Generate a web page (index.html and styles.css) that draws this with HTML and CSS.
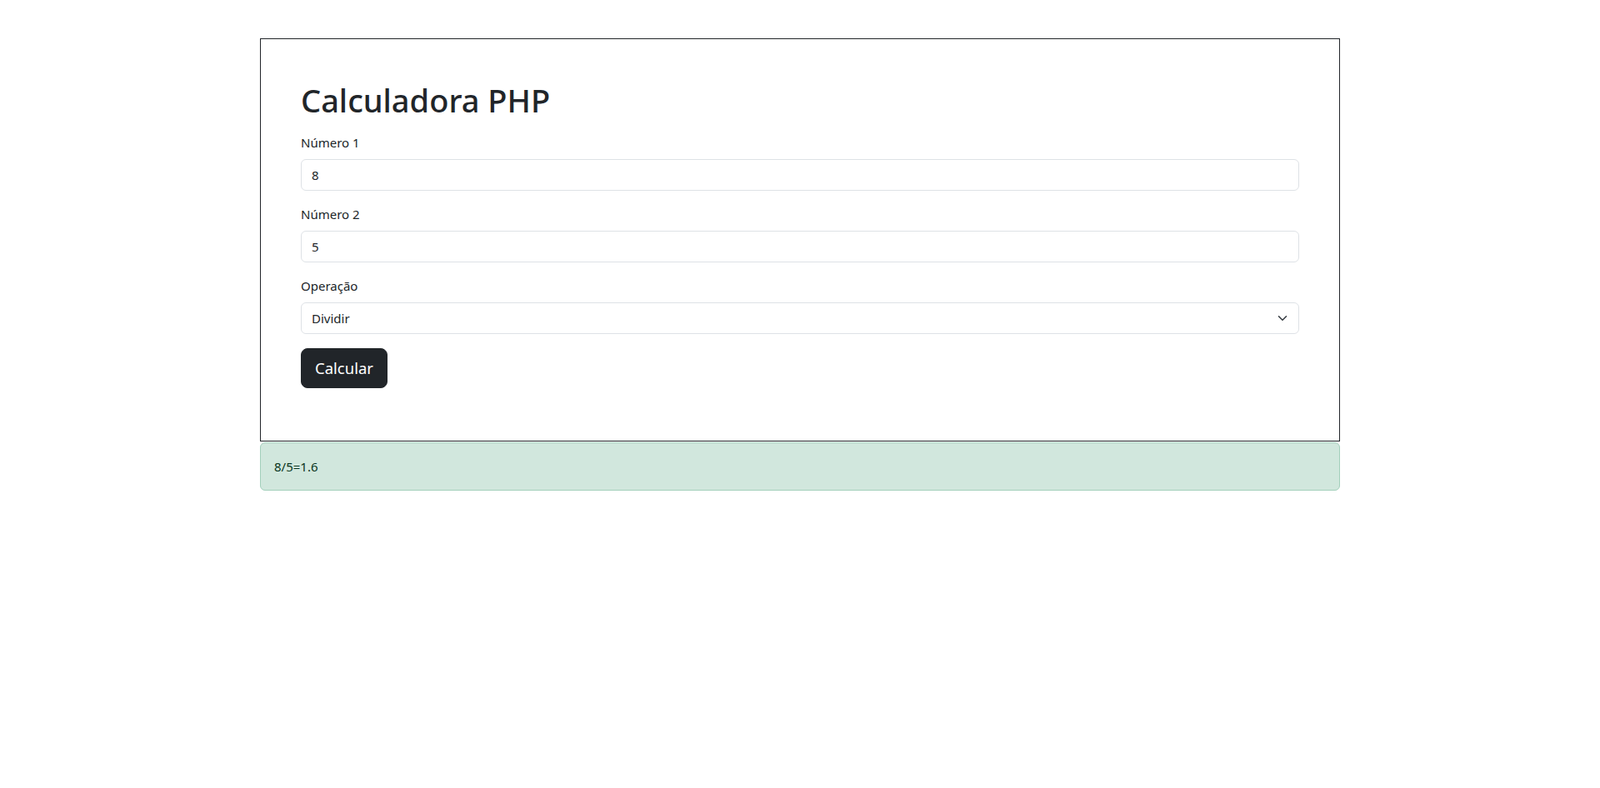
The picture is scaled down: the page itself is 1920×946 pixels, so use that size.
FILE: index.html
```html
<!DOCTYPE html>
<html lang="pt">
<head>
<meta charset="utf-8">
<title>Calculadora PHP</title>
<link rel="stylesheet" href="styles.css">
</head>
<body>
<div class="container">
  <div class="card-box">
    <h1 class="title">Calculadora PHP</h1>
    <form class="calc-form">
      <div class="field">
        <label class="field-label" for="n1">Número 1</label>
        <input class="field-input" id="n1" type="text" value="8">
      </div>
      <div class="field">
        <label class="field-label" for="n2">Número 2</label>
        <input class="field-input" id="n2" type="text" value="5">
      </div>
      <div class="field">
        <label class="field-label" for="op">Operação</label>
        <div class="select-wrap">
          <select class="field-input field-select" id="op">
            <option>Somar</option>
            <option>Subtrair</option>
            <option>Multiplicar</option>
            <option selected>Dividir</option>
          </select>
          <svg class="select-chevron" width="12" height="12" viewBox="0 0 16 16"><path fill="none" stroke="#343a40" stroke-linecap="round" stroke-linejoin="round" stroke-width="2" d="m2 5 6 6 6-6"/></svg>
        </div>
      </div>
      <button class="btn-calc" type="button">Calcular</button>
    </form>
  </div>
  <div class="alert-success">8/5=1.6</div>
</div>
</body>
</html>
```

FILE: styles.css
```css
* { box-sizing: border-box; }
html, body { margin: 0; padding: 0; background: #fff; }
body {
  font-family: "Noto Sans", "Open Sans", "Liberation Sans", sans-serif;
  font-size: 16px;
  line-height: 24px;
  color: #212529;
}
.container {
  width: 1320px;
  margin: 46px auto 0;
  padding: 0 12px;
}
.card-box {
  border: 1px solid #212529;
  padding: 48px;
}
.title {
  margin: 0 0 16px;
  padding-top: 1px;
  height: 48px;
  font-size: 38px;
  line-height: 48px;
  font-weight: 500;
  color: #212529;
}
.field { margin-bottom: 16px; }
.field-label {
  display: block;
  margin-bottom: 8px;
  font-size: 15px;
  line-height: 24px;
}
.field-input {
  display: block;
  width: 100%;
  height: 38px;
  padding: 6px 12px;
  font-family: inherit;
  font-size: 15px;
  line-height: 24px;
  color: #212529;
  background: #fff;
  border: 1px solid #dee2e6;
  border-radius: 6px;
  outline: none;
}
.select-wrap { position: relative; }
.field-select {
  appearance: none;
  -webkit-appearance: none;
  padding-right: 36px;
}
.select-chevron {
  position: absolute;
  right: 14px;
  top: 13px;
  width: 12px;
  height: 12px;
  pointer-events: none;
}
.btn-calc {
  display: inline-block;
  height: 48px;
  width: 104px;
  padding: 8px 0;
  margin-top: 1px;
  margin-bottom: 15px;
  font-family: inherit;
  font-size: 18.5px;
  line-height: 30px;
  color: #fff;
  background: #212529;
  border: 1px solid #212529;
  border-radius: 8px;
  cursor: pointer;
}
.alert-success {
  margin-top: 1px;
  padding: 16px;
  line-height: 24px;
  font-size: 15px;
  color: #0a3622;
  background: #d1e7dd;
  border: 1px solid #a3cfbb;
  border-radius: 6px;
}
```
